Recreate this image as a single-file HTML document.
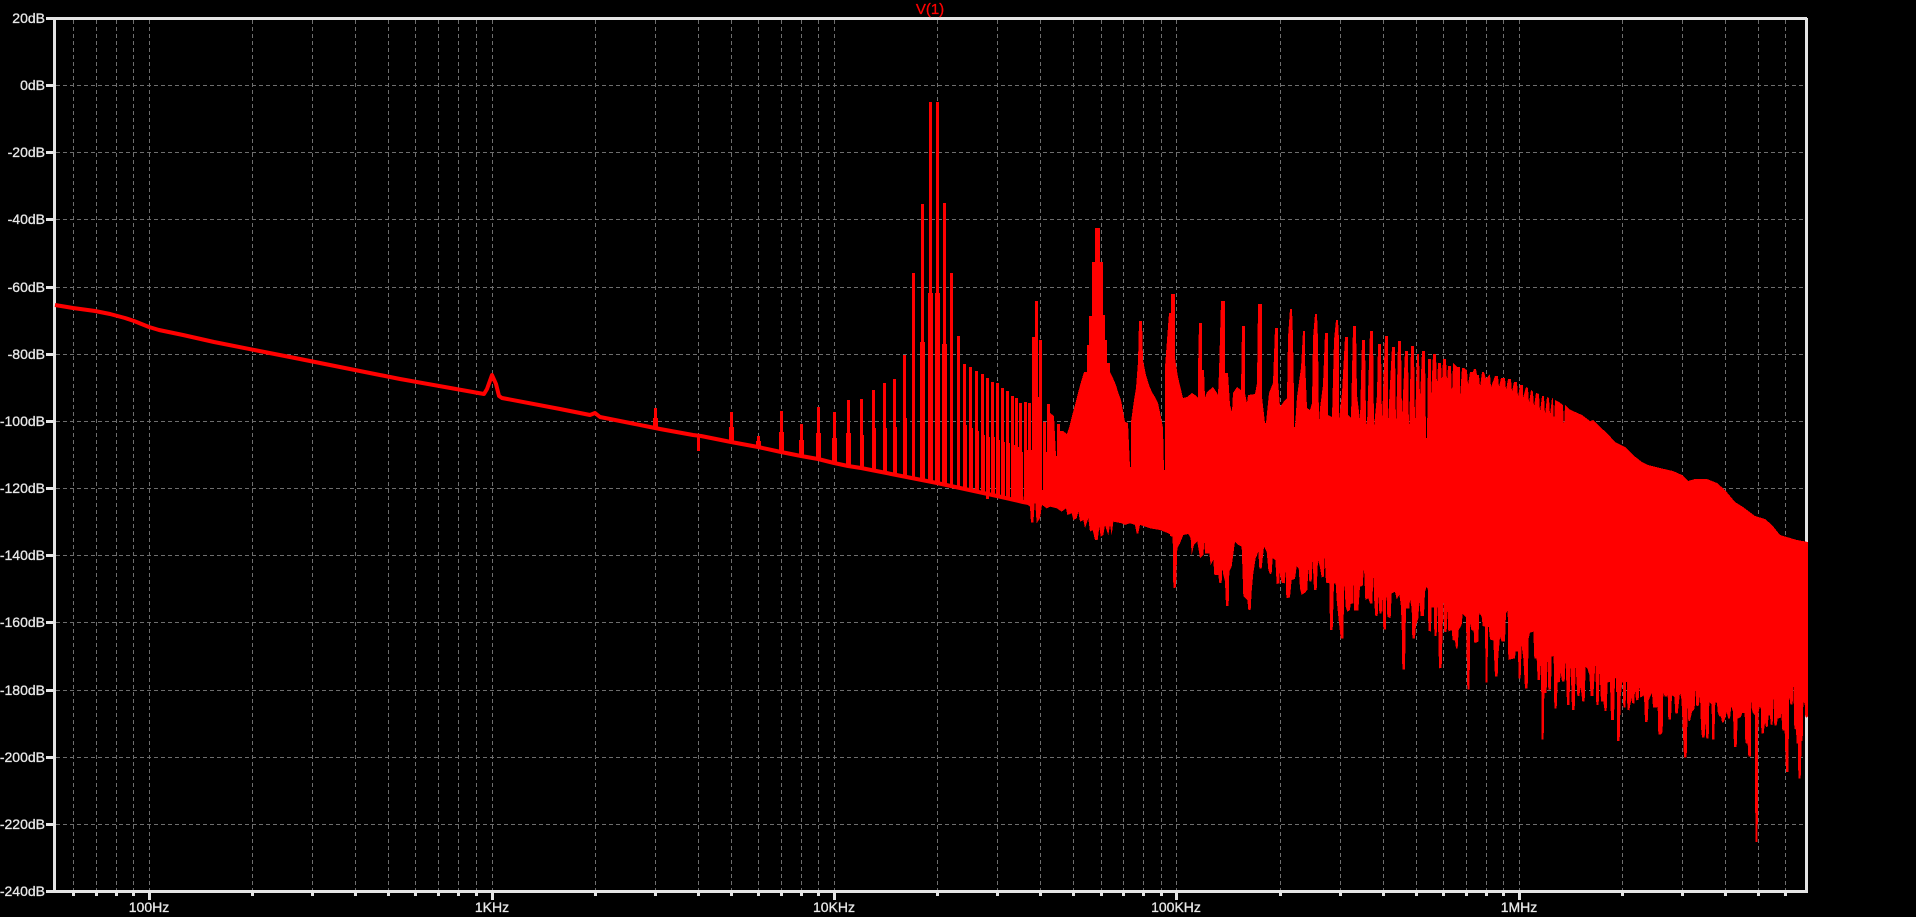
<!DOCTYPE html>
<html lang="en">
<head>
<meta charset="utf-8">
<title>V(1)</title>
<style>
html,body{margin:0;padding:0;background:#000;width:1916px;height:917px;overflow:hidden}
svg{display:block}
text{font-family:"Liberation Sans",sans-serif;font-size:14px;fill:#e8e8e8;stroke:#e8e8e8;stroke-width:.3px}
.y text{text-anchor:end}
.x text{text-anchor:middle}
</style>
</head>
<body>
<svg width="1916" height="917" viewBox="0 0 1916 917" xmlns="http://www.w3.org/2000/svg">
<rect width="1916" height="917" fill="#000"/>

<!-- grid -->
<g stroke="#6e6e6e" stroke-width="1" stroke-dasharray="4 3" fill="none" shape-rendering="crispEdges">
<path d="M56 85.5H1805M56 152.5H1805M56 219.5H1805M56 287.5H1805M56 354.5H1805M56 421.5H1805M56 488.5H1805M56 555.5H1805M56 622.5H1805M56 690.5H1805M56 757.5H1805M56 824.5H1805"/>
<path d="M73.5 20V890M96.5 20V890M116.5 20V890M133.5 20V890M149.5 20V890M252.5 20V890M312.5 20V890M355.5 20V890M388.5 20V890M415.5 20V890M438.5 20V890M458.5 20V890M476.5 20V890M492.5 20V890M595.5 20V890M655.5 20V890M698.5 20V890M731.5 20V890M758.5 20V890M781.5 20V890M801.5 20V890M818.5 20V890M834.5 20V890M937.5 20V890M997.5 20V890M1040.5 20V890M1073.5 20V890M1101.5 20V890M1123.5 20V890M1143.5 20V890M1161.5 20V890M1176.5 20V890M1280.5 20V890M1340.5 20V890M1383.5 20V890M1416.5 20V890M1443.5 20V890M1466.5 20V890M1486.5 20V890M1503.5 20V890M1519.5 20V890M1622.5 20V890M1682.5 20V890M1725.5 20V890M1758.5 20V890M1785.5 20V890"/>
</g>

<!-- frame and ticks -->
<g fill="#e4e4e4" shape-rendering="crispEdges">
<rect x="46" y="17" width="1761" height="3"/>
<rect x="53" y="17" width="3" height="876"/>
<rect x="46" y="890" width="1761" height="3"/>
<rect x="1805" y="18" width="3" height="875"/>
</g>
<g stroke="#e4e4e4" stroke-width="3" fill="none" shape-rendering="crispEdges">
<path d="M46 85.5H53M46 152.5H53M46 219.5H53M46 287.5H53M46 354.5H53M46 421.5H53M46 488.5H53M46 555.5H53M46 622.5H53M46 690.5H53M46 757.5H53M46 824.5H53"/>
<path d="M73.5 893V896M96.5 893V896M116.5 893V896M133.5 893V896M252.5 893V896M312.5 893V896M355.5 893V896M388.5 893V896M415.5 893V896M438.5 893V896M458.5 893V896M476.5 893V896M595.5 893V896M655.5 893V896M698.5 893V896M731.5 893V896M758.5 893V896M781.5 893V896M801.5 893V896M818.5 893V896M937.5 893V896M997.5 893V896M1040.5 893V896M1073.5 893V896M1101.5 893V896M1123.5 893V896M1143.5 893V896M1161.5 893V896M1280.5 893V896M1340.5 893V896M1383.5 893V896M1416.5 893V896M1443.5 893V896M1466.5 893V896M1486.5 893V896M1503.5 893V896M1622.5 893V896M1682.5 893V896M1725.5 893V896M1758.5 893V896M1785.5 893V896"/>
<path d="M149.5 893V900M492.5 893V900M834.5 893V900M1176.5 893V900M1519.5 893V900"/>
</g>

<!-- labels -->
<g class="y">
<text x="45" y="23">20dB</text>
<text x="45" y="90">0dB</text>
<text x="45" y="157">-20dB</text>
<text x="45" y="224">-40dB</text>
<text x="45" y="292">-60dB</text>
<text x="45" y="359">-80dB</text>
<text x="45" y="426">-100dB</text>
<text x="45" y="493">-120dB</text>
<text x="45" y="560">-140dB</text>
<text x="45" y="627">-160dB</text>
<text x="45" y="695">-180dB</text>
<text x="45" y="762">-200dB</text>
<text x="45" y="829">-220dB</text>
<text x="45" y="896">-240dB</text>
</g>
<g class="x">
<text x="149" y="912">100Hz</text>
<text x="492" y="912">1KHz</text>
<text x="834" y="912">10KHz</text>
<text x="1176" y="912">100KHz</text>
<text x="1519" y="912">1MHz</text>
</g>
<text x="930" y="14" text-anchor="middle" style="fill:#f00;stroke:#f00;font-size:15px">V(1)</text>

<!-- baseline -->
<polyline fill="none" stroke="#f00" stroke-width="4" stroke-linejoin="round" points="55,305 73,308 95,311 110,314 125,318 134,321 149,327 159,330 183,335 214,342 300,359 400,379 484,394 487,389 492,375 496,384 499,396 502,398 560,409 590,415 595,413 600,417 650,427 660,429 693,435 701,436 731,442 758,447 781,452 801,456 818,459 834,463 848,466 861,468 937,483 997,496 1023,502 1034,504"/>

<!-- harmonics: narrow bars -->
<path fill="none" stroke="#f00" stroke-width="3" shape-rendering="crispEdges" d="M655.5 408V428M698.5 436V451M731.5 412V442M758.5 436V447M781.5 411V452M801.5 424V456M818.5 407V459M834.5 412V463M848.5 400V466M861.5 399V468M873.5 390V470M884.5 383V472M894.5 379V474M904.5 355V476M913.5 273V478M922.5 204V480M930.5 102V482M937.5 102V483M944.5 203V485M951.5 273V486M958.5 336V488M964.5 364V489M970.5 367V490M976.5 371V492M982.5 374V493M987.5 378V499M992.5 382V495M997.5 383V496M1002.5 388V497M1007.5 391V498M1012.5 396V500M1016.5 398V500M1020.5 403V501M1025.5 402V502M1029.5 403V503"/>
<!-- harmonics: wider lower stubs -->
<path fill="none" stroke="#f00" stroke-width="5" shape-rendering="crispEdges" d="M655.5 418V428M731.5 427V442M758.5 441V447M781.5 432V452M801.5 440V456M818.5 433V459M834.5 438V463M848.5 433V466M930.5 293V482M937.5 293V483M922.5 342V480M944.5 344V485"/>
<path fill="none" stroke="#f00" stroke-width="4" shape-rendering="crispEdges" d="M862 435V468M874 428V470M885 428V472M895 427V474M905 418V476M965 425V489M971 428V490M977 431V492M983 435V493M988 437V494M993 437V495M998 440V496M1003 442V497M1008 443V498M1013 445V500M1017 447V500M1021 452V501M1026 450V502M1030 450V503"/>

<!-- spectrum top envelope -->
<polygon fill="#f00" shape-rendering="crispEdges" points="1032,500 1032,337 1035,337 1035,301 1038,301 1038,397 1039,397 1039,340 1042,340 1042,490 1043,490 1043,422 1046,422 1046,452 1047,452 1047,404 1050,404 1050,413 1054,416 1056,456 1057,456 1057,424 1060,424 1060,431 1063,431 1067,434 1069,428 1072,416 1075,405 1078,393 1081,382 1084,372 1087,372 1087,345 1089,345 1089,316 1092,316 1092,262 1095,262 1095,228 1100,228 1100,262 1103,262 1103,315 1105,315 1105,340 1107,340 1107,363 1110,363 1110,372 1113,378 1116,385 1118,392 1121,400 1123,411 1125,422 1128,423 1130,467 1131,467 1131,422 1134,400 1136,388 1138,362 1139,321 1142,321 1143,360 1146,375 1149,385 1152,392 1155,397 1158,403 1161,417 1163,428 1164,470 1165,470 1165,367 1169,313 1171,313 1171,294 1175,294 1175,358 1178,377 1183,398 1187,397 1192,393 1195,395 1198,398 1198,370 1199,323 1202,323 1202,370 1204,370 1205,398 1207,392 1213,387 1217,393 1218,395 1219,372 1221,301 1225,301 1225,373 1228,373 1230,405 1232,412 1233,393 1237,387 1241,390 1242,326 1245,326 1245,393 1247,403 1248,395 1255,394 1257,383 1258,304 1262,304 1262,397 1265,423 1266,423 1267,413 1269,393 1273,383 1275,328 1278,328 1278,380 1280,407 1285,400 1287,398 1288,337 1290,309 1292,309 1293,337 1294,398 1294,427 1295,427 1297,397 1299,382 1301,368 1303,331 1305,331 1305,360 1307,408 1310,410 1312,403 1313,338 1315,314 1317,314 1318,340 1319,423 1320,408 1323,385 1325,333 1328,333 1328,415 1332,417 1334,340 1336,320 1338,320 1339,340 1339,420 1342,393 1345,337 1348,337 1348,415 1351,418 1353,326 1356,326 1357,395 1360,420 1362,340 1365,340 1366,420 1367,425 1370,331 1373,331 1374,427 1377,395 1378,344 1381,344 1382,423 1385,336 1388,336 1388,423 1392,347 1395,347 1396,430 1398,341 1401,341 1402,417 1405,351 1408,351 1409,435 1411,346 1414,346 1415,427 1417,354 1419,354 1420,400 1422,351 1425,351 1426,438 1427,438 1428,359 1431,359 1431,398 1433,354 1436,354 1437,387 1438,363 1441,363 1442,383 1443,359 1446,359 1447,382 1448,366 1451,366 1452,396 1453,363 1455,365 1457,367 1460,367 1460,397 1462,368 1464,368 1465,369 1467,370 1468,385 1470,372 1473,372 1474,369 1476,369 1477,375 1479,375 1480,387 1482,372 1484,372 1486,379 1490,374 1491,387 1495,376 1498,376 1499,387 1501,378 1505,378 1506,390 1508,379 1511,379 1512,392 1514,382 1517,382 1518,397 1520,385 1523,385 1523,398 1526,387 1528,388 1529,403 1531,390 1533,392 1534,407 1536,393 1539,394 1540,412 1542,396 1544,396 1545,415 1547,397 1549,398 1550,415 1552,398 1553,399 1554,422 1555,400 1559,402 1563,405 1564,428 1565,405 1569,409 1573,411 1582,415 1590,421 1593,420 1600,427 1607,433 1615,442 1625,447 1633,455 1642,462 1648,465 1660,468 1673,471 1682,475 1688,481 1695,479 1707,479 1717,483 1725,490 1735,502 1743,507 1755,516 1765,519 1772,525 1780,535 1797,540 1808,542 1808,620 1612,620 1170,520 1040,497"/>

<!-- bottom fringe 1023-1172 -->
<polygon fill="#f00" shape-rendering="crispEdges" transform="translate(860 340) scale(.33333)" points="490,470 490,485 510,500 513,548 520,548 525,480 530,550 540,535 546,495 560,505 570,500 590,505 605,515 618,505 622,525 635,520 640,540 650,535 655,515 660,545 670,540 675,565 685,535 690,575 698,570 705,600 713,600 718,560 722,590 730,585 735,555 745,585 750,555 755,585 760,545 785,550 795,555 810,550 825,555 830,580 835,580 840,555 870,565 900,570 925,580 935,585 935,480"/>

<!-- bottom fringe 1170-1610 -->
<polygon fill="#f00" shape-rendering="crispEdges" transform="translate(1170 510) scale(.33333)" points="0,-30 0,78 8,80 10,235 18,232 22,115 30,100 40,75 55,72 62,85 65,135 72,105 82,95 90,145 100,135 103,97 105,130 118,130 122,165 130,150 133,195 145,195 148,220 155,218 157,175 160,195 165,215 168,288 176,288 178,185 185,170 195,95 205,105 215,110 220,258 232,270 235,300 242,300 245,245 250,190 257,145 265,125 268,175 275,175 282,110 290,125 295,180 300,193 305,190 308,145 316,150 320,222 328,220 329,190 335,218 345,220 347,175 349,265 360,262 365,210 375,207 380,170 386,175 390,235 395,255 405,248 412,240 415,175 418,215 425,215 428,150 432,240 440,240 444,150 450,172 455,202 462,200 464,140 468,218 478,220 480,360 488,360 492,220 497,220 500,270 507,340 512,385 520,385 523,218 527,290 532,305 540,300 542,282 550,280 551,200 552,302 565,302 570,230 578,228 582,172 586,270 595,265 600,280 607,280 610,198 613,280 616,318 623,318 626,255 628,310 635,310 637,265 640,358 648,358 649,235 652,320 662,325 665,250 675,245 680,268 688,255 692,280 695,340 697,478 705,478 708,295 718,295 720,268 725,295 727,385 735,385 738,345 745,325 748,275 752,318 762,318 765,245 770,230 774,240 775,362 783,365 785,292 792,292 793,378 800,378 803,278 807,475 815,473 820,270 822,365 830,367 832,298 835,365 845,360 848,390 855,392 858,415 863,415 866,360 875,345 878,312 888,322 892,538 899,538 900,340 904,360 911,362 913,400 925,395 928,308 935,320 938,348 945,350 947,518 952,518 955,338 960,388 970,392 975,500 983,500 985,438 990,380 995,395 1005,395 1008,310 1013,300 1015,450 1025,447 1035,445 1037,425 1044,425 1046,505 1052,505 1055,408 1060,445 1065,535 1073,535 1076,385 1080,368 1090,365 1093,445 1100,445 1103,510 1110,510 1113,455 1115,688 1121,688 1123,550 1130,548 1132,445 1135,540 1143,538 1145,440 1151,438 1153,595 1160,595 1163,518 1170,515 1172,488 1176,515 1184,515 1187,450 1191,585 1198,585 1202,465 1206,600 1214,600 1217,468 1222,558 1228,558 1232,532 1237,575 1244,575 1247,470 1252,475 1258,495 1262,558 1270,558 1274,495 1276,465 1279,585 1286,585 1289,485 1293,575 1300,575 1304,603 1310,603 1313,518 1320,515 1320,-30"/>

<!-- sliver 1610-1616 -->
<polygon fill="#f00" shape-rendering="crispEdges" points="1610,600 1610,683 1611,720 1614,720 1615,678 1617,680 1617,600"/>

<!-- bottom fringe 1616-1808 -->
<polygon fill="#f00" shape-rendering="crispEdges" transform="translate(1616 617) scale(.33333)" points="0,-50 0,225 3,225 3,372 11,372 14,240 18,205 20,185 22,272 29,272 30,195 33,195 34,278 40,280 44,258 46,243 48,258 55,260 57,215 60,250 68,248 70,208 73,242 80,238 83,235 85,258 87,315 95,315 98,250 103,238 108,228 111,272 120,272 125,270 127,352 135,352 140,345 142,225 146,238 153,238 155,232 157,308 165,308 168,235 175,240 178,290 185,290 192,228 196,245 198,280 204,422 212,422 215,268 217,312 222,312 228,285 236,275 238,216 241,268 249,265 252,234 255,330 258,362 266,362 268,318 271,365 278,365 280,255 287,262 288,368 295,368 298,256 303,258 305,285 310,298 315,298 318,316 323,316 328,303 332,285 337,305 342,305 346,268 351,285 354,390 362,390 365,305 375,300 379,288 386,288 388,378 395,380 397,418 405,418 406,235 409,285 417,295 418,675 425,675 427,290 431,270 435,275 436,350 443,350 447,316 450,330 455,330 458,295 462,295 464,322 470,325 472,238 475,325 482,325 485,305 495,302 496,288 499,340 506,340 508,410 510,465 517,465 520,232 523,262 530,262 532,204 535,335 540,338 542,380 546,380 547,485 554,485 557,372 560,372 562,256 566,258 568,300 572,302 576,298 576,-50"/>
</svg>
</body>
</html>
